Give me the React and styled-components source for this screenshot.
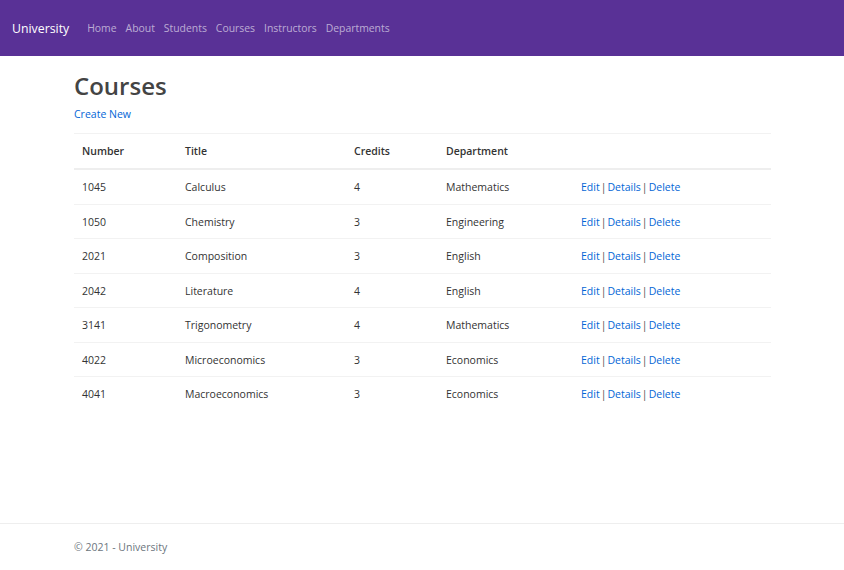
import React from "react";
import styled, { createGlobalStyle } from "styled-components";

const GlobalStyle = createGlobalStyle`
    body {
        margin: 0;
        font-family: "Open Sans", "Noto Sans", sans-serif;
        color: #444;
        background: #fff;
    }
`;

const Page = styled.div`
    min-height: 570px;
    display: flex;
    flex-direction: column;
`;

const NavBar = styled.nav`
    height: 56px;
    background-color: #593196;
    display: flex;
    align-items: center;
    padding: 0 12px;
    box-sizing: border-box;
`;

const Brand = styled.a`
    color: #fff;
    font-size: 12.3px;
    margin-right: 18px;
    text-decoration: none;
`;

const NavLinks = styled.div`
    display: flex;
    gap: 9px;
`;

const NavLink = styled.a`
    color: rgba(255, 255, 255, 0.6);
    font-size: 10.4px;
    text-decoration: none;
`;

const Main = styled.main`
    flex: 1;
    padding: 0 73px 0 74px;
`;

const Heading = styled.h1`
    font-size: 24px;
    font-weight: 600;
    color: #444;
    margin: 16px 0 0;
    line-height: 1.2;
`;

const Link = styled.a`
    color: #0366d6;
    font-size: 10.5px;
    text-decoration: none;
`;

const Table = styled.table`
    width: 100%;
    margin-top: 10px;
    border-collapse: collapse;
    table-layout: fixed;
    font-size: 10.5px;
`;

const Th = styled.th`
    box-sizing: border-box;
    text-align: left;
    font-weight: 600;
    color: #333;
    padding: 0 8px 1px;
    height: 36px;
    border-top: 1px solid #f2f2f2;
    border-bottom: 2px solid #eeeeee;
    width: ${(p) => (p.$w ? `${p.$w}px` : "auto")};
`;

const Td = styled.td`
    padding: 0 8px;
    height: 33.5px;
    color: #333;
    border-bottom: 1px solid #f2f2f2;
    tr:last-child > & {
        border-bottom: none;
    }
`;

const Sep = styled.span`
    color: #555;
    margin: 0 1px;
`;

const Footer = styled.footer`
    border-top: 1px solid #eee;
    height: 46px;
    display: flex;
    align-items: center;
    padding-left: 74px;
    font-size: 10.5px;
    color: #6c757d;
`;

const courses = [
    ["1045", "Calculus", 4, "Mathematics"],
    ["1050", "Chemistry", 3, "Engineering"],
    ["2021", "Composition", 3, "English"],
    ["2042", "Literature", 4, "English"],
    ["3141", "Trigonometry", 4, "Mathematics"],
    ["4022", "Microeconomics", 3, "Economics"],
    ["4041", "Macroeconomics", 3, "Economics"],
];

const App = () => {
    return (
        <Page>
            <GlobalStyle />
            <NavBar>
                <Brand href="#">University</Brand>
                <NavLinks>
                    {["Home", "About", "Students", "Courses", "Instructors", "Departments"].map((l) => (
                        <NavLink key={l} href="#">{l}</NavLink>
                    ))}
                </NavLinks>
            </NavBar>
            <Main>
                <Heading>Courses</Heading>
                <Link href="#">Create New</Link>
                <Table>
                    <thead>
                        <tr>
                            <Th $w={103}>Number</Th>
                            <Th $w={169}>Title</Th>
                            <Th $w={92}>Credits</Th>
                            <Th $w={135}>Department</Th>
                            <Th></Th>
                        </tr>
                    </thead>
                    <tbody>
                        {courses.map(([num, title, credits, dept]) => (
                            <tr key={num}>
                                <Td>{num}</Td>
                                <Td>{title}</Td>
                                <Td>{credits}</Td>
                                <Td>{dept}</Td>
                                <Td>
                                    <Link href="#">Edit</Link>
                                    <Sep>|</Sep>
                                    <Link href="#">Details</Link>
                                    <Sep>|</Sep>
                                    <Link href="#">Delete</Link>
                                </Td>
                            </tr>
                        ))}
                    </tbody>
                </Table>
            </Main>
            <Footer>© 2021 - University</Footer>
        </Page>
    );
};

export default App;
